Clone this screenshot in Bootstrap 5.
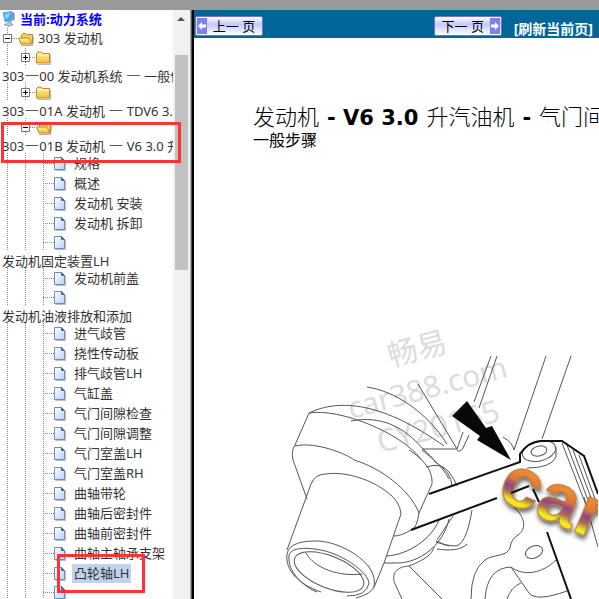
<!DOCTYPE html>
<html lang="zh-CN">
<head>
<meta charset="utf-8">
<meta name="viewport" content="width=device-width, initial-scale=1">
<title>动力系统</title>
<link rel="stylesheet" href="https://cdn.jsdelivr.net/npm/bootstrap@5.3.0/dist/css/bootstrap.min.css">
<style>
body{font-family:"Noto Sans","Noto Sans CJK SC",sans-serif;font-size:13px;line-height:18px;color:#333;background:#fff}
.topbar{height:10px;background:#999}
.tree-pane{width:173px}
.tree-pane a{color:inherit;text-decoration:none;white-space:nowrap}
.tree-pane .current-title{color:#00f;height:18px}
.node{display:flex;align-items:center;height:20px;white-space:nowrap}
.node.short{height:18px}
.wrapped{display:block;height:17px;line-height:20px;padding-left:2px}
.dash{font-family:"Noto Sans CJK SC",sans-serif;font-size:15px;line-height:1}
.guide,.tee,.toggle{flex:none;width:18px;height:100%;background:repeating-linear-gradient(#888 0 1px,transparent 1px 2px) 7px 0/1px 100% no-repeat}
.tee{background:repeating-linear-gradient(#888 0 1px,transparent 1px 2px) 7px 0/1px 100% no-repeat,repeating-linear-gradient(90deg,#888 0 1px,transparent 1px 2px) 7px 50%/11px 1px no-repeat}
.toggle{border:0;padding:0 0 0 3px;display:flex;align-items:center;background:repeating-linear-gradient(#888 0 1px,transparent 1px 2px) 7px 0/1px 100% no-repeat,repeating-linear-gradient(90deg,#888 0 1px,transparent 1px 2px) 12px 50%/6px 1px no-repeat}
.icon{flex:none;width:20px;height:16px}
.picked{background:#c1d2ee;padding:0 2px;margin-left:-2px;line-height:19px}
.scroller{width:17px;background:#f1f1f1}
.scroller .arrow{height:17px}
.thumb{height:215px;margin:28px 2px 0;background:#c1c1c1}
.divider{width:4px;background:linear-gradient(90deg,#aaa 0 1px,#555 1px 2px,#000 2px)}
.commands{height:28px;background:#069;padding:2px 6px 0 1px}
.page-btn{display:flex;align-items:stretch;width:68px;height:20px;border:1px solid #7474c4;border-radius:2px;padding:1px;font-size:13px;line-height:16px;color:#000;background:linear-gradient(#fff,#c3c9fc 40%,#fff)}
.page-btn svg{flex:none;width:10px;height:16px;background:#7b82f0}
.page-btn span{flex:1;text-align:center}
.refresh{color:#fff;font-weight:700;font-size:14px;line-height:18px;text-decoration:none;margin-left:12px}
.doc{padding:66px 0 0 59px;color:#000}
.doc h1{font-family:"DejaVu Sans","Noto Sans CJK SC",sans-serif;font-size:22px;line-height:28px;font-weight:300;white-space:nowrap;margin:0}
.doc h1 b{font-size:21px;font-weight:700;margin:0 1px}
.doc h2{font-size:16px;line-height:16px;font-weight:400;margin:0 0 172px}
.figure-art{display:block;width:345px;height:279px}
.mark-box{position:absolute;border:3px solid #f33;pointer-events:none}
.mark-a{left:1px;top:122px;width:180px;height:41px}
.mark-b{left:57px;top:554px;width:88px;height:39px}
</style>
<script src="https://cdn.jsdelivr.net/npm/bootstrap@5.3.0/dist/js/bootstrap.bundle.min.js"></script>
</head>
<body>
<svg width="0" height="0" class="position-absolute" aria-hidden="true">
<defs>
<linearGradient id="gd" x1="0" y1="0" x2="1" y2="1"><stop offset="0" stop-color="#fff"/><stop offset="1" stop-color="#b9d2f7"/></linearGradient>
<linearGradient id="gf" x1="0" y1="0" x2="0" y2="1"><stop offset="0" stop-color="#fff2a0"/><stop offset="1" stop-color="#f3bd3c"/></linearGradient>
<symbol id="docu" viewBox="0 0 20 16"><path d="M1.500 15.500H11.700V6" fill="none" stroke="#bbb"/><path d="M.5 2.500H7.500L10.500 5.500V14.500H.5Z" fill="url(#gd)" stroke="#6f89c2"/><path d="M7.500 2.500V5.500H10.500Z" fill="#4a67a8" stroke="#4a67a8"/></symbol>
<symbol id="fold" viewBox="0 0 20 16"><path d="M1.500 15.500H14.500V6" fill="none" stroke="#bbb"/><path d="M.5 14V4.500L2 3H5L6.500 4.500H13.500V14Z" fill="url(#gf)" stroke="#ba8b22"/><path d="M1.500 6H12.500" stroke="#fffbd5"/></symbol>
<symbol id="foldo" viewBox="0 0 20 16"><path d="M3 15.500H14.500L15.500 7" fill="none" stroke="#aaa"/><path d="M3.500 12V5L5 3.500H8L9 4.500H14.500V14" fill="#f6ce59" stroke="#ba8b22"/><path d="M.5 8H11L14 14H3Z" fill="url(#gf)" stroke="#ba8b22"/></symbol>
<symbol id="minus" viewBox="0 0 9 9"><path d="M.5.5H8.500V8.500H.5Z" fill="#fff" stroke="#777"/><path d="M2 4.500H7" stroke="#000"/></symbol>
<symbol id="plus" viewBox="0 0 9 9"><path d="M.5.5H8.500V8.500H.5Z" fill="#fff" stroke="#777"/><path d="M2 4.500H7M4.500 2V7" stroke="#000"/></symbol>
</defs>
</svg>
<div class="position-relative d-flex flex-column vh-100 overflow-hidden">
<div class="topbar flex-shrink-0"></div>
<div class="d-flex flex-grow-1 overflow-hidden">
<nav class="tree-pane flex-shrink-0 overflow-hidden" aria-label="目录">
<div class="current-title d-flex align-items-center fw-bold"><svg class="icon" viewBox="0 0 20 16"><path d="M3 1.500 12 .5 13 9 5 11Z" fill="#39a7ef" stroke="#8daed0"/><path d="M5 3 10.500 2 8 7 5.500 8Z" fill="#91dafc"/><path d="M12.500 1 14.500 2V9.500L13 9Z" fill="#6a86b2"/><path d="M8 10.500 11 10V12.500L13 13.500 9 15.500 4 13.500 8 12.500Z" fill="#bbc4d8" stroke="#768aac" stroke-width=".7"/></svg><span>当前:动力系统</span></div>
<div class="node"><button class="toggle" aria-label="收起"><svg width="9" height="9"><use href="#minus"/></svg></button><svg class="icon"><use href="#foldo"/></svg><a href="#">303 发动机</a></div>
<div class="node short"><i class="guide"></i><button class="toggle" aria-label="展开"><svg width="9" height="9"><use href="#plus"/></svg></button><svg class="icon"><use href="#fold"/></svg></div>
<a class="wrapped" href="#">303<span class="dash">—</span>00 发动机系统 <span class="dash">—</span> 一般信息</a>
<div class="node short"><i class="guide"></i><button class="toggle" aria-label="展开"><svg width="9" height="9"><use href="#plus"/></svg></button><svg class="icon"><use href="#fold"/></svg></div>
<a class="wrapped" href="#">303<span class="dash">—</span>01A 发动机 <span class="dash">—</span> TDV6 3.0 升柴油机</a>
<div class="node short"><i class="guide"></i><button class="toggle" aria-label="收起"><svg width="9" height="9"><use href="#minus"/></svg></button><svg class="icon"><use href="#foldo"/></svg></div>
<a class="wrapped" href="#">303<span class="dash">—</span>01B 发动机 <span class="dash">—</span> V6 3.0 升汽油机</a>
<div class="node"><i class="guide"></i><i class="guide"></i><i class="tee"></i><svg class="icon"><use href="#docu"/></svg><a href="#">规格</a></div>
<div class="node"><i class="guide"></i><i class="guide"></i><i class="tee"></i><svg class="icon"><use href="#docu"/></svg><a href="#">概述</a></div>
<div class="node"><i class="guide"></i><i class="guide"></i><i class="tee"></i><svg class="icon"><use href="#docu"/></svg><a href="#">发动机 安装</a></div>
<div class="node"><i class="guide"></i><i class="guide"></i><i class="tee"></i><svg class="icon"><use href="#docu"/></svg><a href="#">发动机 拆卸</a></div>
<div class="node short"><i class="guide"></i><i class="guide"></i><i class="tee"></i><svg class="icon"><use href="#docu"/></svg></div>
<a class="wrapped" href="#">发动机固定装置LH</a>
<div class="node"><i class="guide"></i><i class="guide"></i><i class="tee"></i><svg class="icon"><use href="#docu"/></svg><a href="#">发动机前盖</a></div>
<div class="node short"><i class="guide"></i><i class="guide"></i><i class="tee"></i><svg class="icon"><use href="#docu"/></svg></div>
<a class="wrapped" href="#">发动机油液排放和添加</a>
<div class="node"><i class="guide"></i><i class="guide"></i><i class="tee"></i><svg class="icon"><use href="#docu"/></svg><a href="#">进气歧管</a></div>
<div class="node"><i class="guide"></i><i class="guide"></i><i class="tee"></i><svg class="icon"><use href="#docu"/></svg><a href="#">挠性传动板</a></div>
<div class="node"><i class="guide"></i><i class="guide"></i><i class="tee"></i><svg class="icon"><use href="#docu"/></svg><a href="#">排气歧管LH</a></div>
<div class="node"><i class="guide"></i><i class="guide"></i><i class="tee"></i><svg class="icon"><use href="#docu"/></svg><a href="#">气缸盖</a></div>
<div class="node"><i class="guide"></i><i class="guide"></i><i class="tee"></i><svg class="icon"><use href="#docu"/></svg><a href="#">气门间隙检查</a></div>
<div class="node"><i class="guide"></i><i class="guide"></i><i class="tee"></i><svg class="icon"><use href="#docu"/></svg><a href="#">气门间隙调整</a></div>
<div class="node"><i class="guide"></i><i class="guide"></i><i class="tee"></i><svg class="icon"><use href="#docu"/></svg><a href="#">气门室盖LH</a></div>
<div class="node"><i class="guide"></i><i class="guide"></i><i class="tee"></i><svg class="icon"><use href="#docu"/></svg><a href="#">气门室盖RH</a></div>
<div class="node"><i class="guide"></i><i class="guide"></i><i class="tee"></i><svg class="icon"><use href="#docu"/></svg><a href="#">曲轴带轮</a></div>
<div class="node"><i class="guide"></i><i class="guide"></i><i class="tee"></i><svg class="icon"><use href="#docu"/></svg><a href="#">曲轴后密封件</a></div>
<div class="node"><i class="guide"></i><i class="guide"></i><i class="tee"></i><svg class="icon"><use href="#docu"/></svg><a href="#">曲轴前密封件</a></div>
<div class="node"><i class="guide"></i><i class="guide"></i><i class="tee"></i><svg class="icon"><use href="#docu"/></svg><a href="#">曲轴主轴承支架</a></div>
<div class="node"><i class="guide"></i><i class="guide"></i><i class="tee"></i><svg class="icon"><use href="#docu"/></svg><a class="picked" href="#" aria-current="page">凸轮轴LH</a></div>
<div class="node short"><i class="guide"></i><i class="guide"></i><i class="tee"></i><svg class="icon"><use href="#docu"/></svg></div>
</nav>
<div class="scroller flex-shrink-0" aria-hidden="true"><svg class="arrow d-block" width="17" viewBox="0 0 17 17"><path d="M4 11 8 7 12 11Z" fill="#505050"/></svg><div class="thumb"></div></div>
<div class="divider flex-shrink-0"></div>
<main class="flex-grow-1 overflow-hidden">
<div class="commands d-flex align-items-start justify-content-between">
<button class="page-btn mt-1" type="button"><svg viewBox="0 0 10 16"><path d="M1 8 5 4V6.500H9V9.500H5V12Z" fill="#fff"/></svg><span>上一 页</span></button>
<div class="d-flex align-items-start"><button class="page-btn mt-1" type="button"><span>下一 页</span><svg viewBox="0 0 10 16"><path d="M9 8 5 4V6.500H1V9.500H5V12Z" fill="#fff"/></svg></button><a class="refresh mt-2" href="#">[刷新当前页]</a></div>
</div>
<article class="doc">
<h1>发动机 <b>- V6 3.0</b> 升汽油机 <b>-</b> 气门间隙检查</h1>
<h2>一般步骤</h2>
<svg class="figure-art" viewBox="254 320 345 279" role="img" aria-label="气门间隙示意图">
<defs><linearGradient id="glogo" x1="0" y1="0" x2="0" y2="1"><stop offset=".38" stop-color="#ef8a2e"/><stop offset=".5" stop-color="#dd7838"/><stop offset=".59" stop-color="#8d478b"/><stop offset=".67" stop-color="#ad6756"/><stop offset=".76" stop-color="#f4e71c"/></linearGradient>
<filter id="sh" x="-20%" y="-20%" width="140%" height="140%"><feDropShadow dx="2" dy="3" stdDeviation="2" flood-color="#000" flood-opacity=".6"/></filter></defs>
<g fill="#dcdcdc" font-family="'Noto Sans','Noto Sans CJK SC',sans-serif" text-anchor="middle"><text font-size="30" transform="translate(421 359) rotate(-15)">畅易</text><text font-size="30" transform="translate(431 398) rotate(-15)">car388.com</text><text font-size="31" transform="translate(442 437) rotate(-15)">CY20165</text></g>
<g fill="none" stroke="#555" stroke-width="1">
<path d="M368 387C395 391 427 411 448 444M419 384 458 449H423M310 413C341 398 385 403 445 446M310 413C340 408 401 432 422 459M352 421C383 415 406 428 423 448Q434 458 435 460M310 413 296 445Q292 451 294 460L308 499M296 446C317 441 350 455 355 460C382 468 411 490 420 513"/>
<path d="M410 450C424 459 434 470 433 484L420 513Q418 528 412 530Q402 536 395 536M423 450C434 459 443 466 450 479M427 467Q442 462 450 472Q456 480 458 486M435 461Q453 472 453 487"/>
<path d="M288 550 312 484Q316 474 327 474C347 471 373 480 388 492Q401 501 402 514L385 563 376 585Q373 594 357 598M288 554C290 543 304 541 317 541C337 541 360 554 370 567Q377 577 375 587M288 554C286 570 299 584 322 592M290 559C288 547 306 547 322 550C346 555 369 573 370 583Q368 596 348 596M290 559C290 574 307 588 318 592"/>
<ellipse cx="330" cy="572" rx="37" ry="16" transform="rotate(22 330 572)"/><path d="M307 553C315 568 340 577 363 574M387 556C410 555 433 538 440 520M385 563H398C420 563 444 546 450 519M410 566C425 560 433 555 435 547M410 566C394 567 393 577 396 584L403 599M410 566 443 599M437 542 450 546M438 549C450 551 463 550 468 544M473 510Q467 547 455 546Q446 546 437 541M454 516 438 540"/>
<path d="M492 356 475 402M498 356 480 408M547 356 515 450Q514 443 504 437M572 356 543 439M464 432 458 449M470 435 464 448Q461 453 458 450"/>
<ellipse cx="540" cy="451" rx="17" ry="10" transform="rotate(-14 540 451)"/><ellipse cx="540" cy="451" rx="8" ry="5" transform="rotate(-14 540 451)"/><path d="M557 447V457Q552 468 528 468M563 443 587 505M568 445 592 508M574 450 597 511M580 455 599 507M585 497 599 547"/>
<path d="M515 507C526 517 528 529 519 535Q512 539 511 548C508 557 494 554 486 560Q472 570 472 599M486 599Q488 568 512 567L530 593Q537 602 568 591M512 567C525 577 544 573 557 560M508 599Q512 587 522 583"/><ellipse cx="535" cy="552" rx="9" ry="6" transform="rotate(-22 535 552)"/></g>
<g fill="none" stroke="#111" stroke-width="2"><path d="M430 494 521 462V454Q529 442 542 441H563L585 456 599 494M412 530 498 498M548 532 572 599"/></g>
<path d="M453 416 468 401 487 428 493 426 512 460 478 440 481 436Z" fill="#080808"/>
<text transform="translate(496 498) rotate(23)" font-family="'Liberation Sans',sans-serif" font-weight="700" font-size="73" fill="url(#glogo)" stroke="#a9793c" stroke-width="1" filter="url(#sh)">car</text>
<path d="M512 493 530 486M534 489 540 502" fill="none" stroke="#111" stroke-width="2"/>
</svg>
</article>
</main>
</div>
<div class="mark-box mark-a"></div>
<div class="mark-box mark-b"></div>
</div>
</body>
</html>
